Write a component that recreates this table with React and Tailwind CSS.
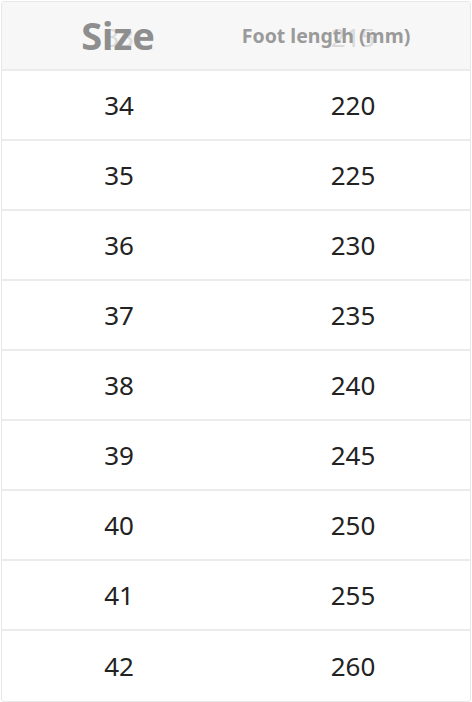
const rows = [
  ["34", "220"],
  ["35", "225"],
  ["36", "230"],
  ["37", "235"],
  ["38", "240"],
  ["39", "245"],
  ["40", "250"],
  ["41", "255"],
  ["42", "260"],
];

export default function App() {
  return (
    <div
      className="w-[472px] h-[702px] bg-white p-px"
      style={{ fontFamily: '"Noto Sans", "Open Sans", sans-serif' }}
    >
      <div className="border border-[#e8e8e8] rounded-[3px] overflow-hidden">
        <div className="relative flex h-[69px] bg-[#f7f7f7] border-b-2 border-[#ebebeb]">
          {/* row scrolled under the sticky header */}
          <div className="absolute inset-0 flex text-[26px] text-[#dadada]">
            <div className="flex-1 flex items-center justify-center pt-1">33</div>
            <div className="flex-1 flex items-center justify-center pt-1">215</div>
          </div>
          <div className="relative flex-1 flex items-center justify-center pl-3 text-[38px] font-bold text-[#8e8e8e]">
            Size
          </div>
          <div className="relative flex-1 flex items-center justify-center pr-[40px] text-[19.5px] font-bold text-[#9a9a9a]">
            Foot length (mm)
          </div>
        </div>
        {rows.map(([size, len], i) => (
          <div
            key={size}
            className={`flex h-[70px] text-[26px] text-[#222] ${
              i < rows.length - 1 ? "border-b-2 border-[#ebebeb]" : ""
            }`}
          >
            <div className="flex-1 flex items-center justify-center">{size}</div>
            <div className="flex-1 flex items-center justify-center">{len}</div>
          </div>
        ))}
      </div>
    </div>
  );
}
